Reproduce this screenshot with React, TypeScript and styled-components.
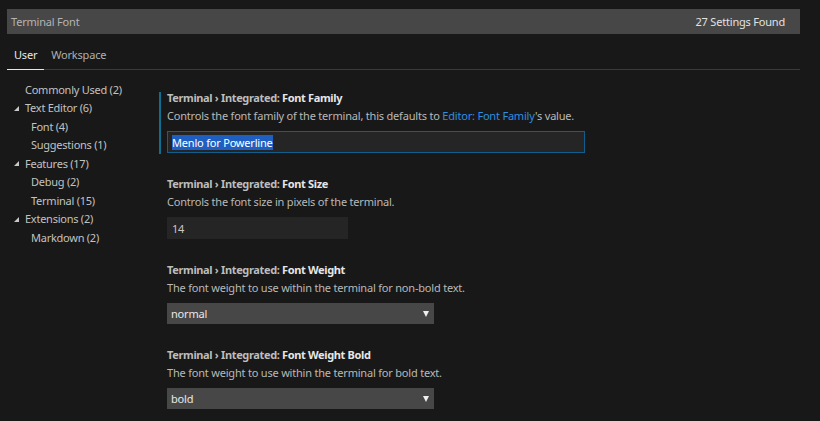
import React from "react";
import styled, { createGlobalStyle } from "styled-components";

const Global = createGlobalStyle`
  html, body { margin: 0; padding: 0; background: #181818; }
  body { font-family: "Noto Sans", "Open Sans", sans-serif; font-size: 11px; color: #c0c0c0; }
  * { box-sizing: border-box; }
`;

const Page = styled.div`
  width: 820px;
  height: 421px;
  overflow: hidden;
  background: #181818;
  display: flex;
  flex-direction: column;
`;

const Header = styled.div`
  padding: 9px 20px 0 7px;
  display: flex;
  flex-direction: column;
`;

const SearchBar = styled.div`
  height: 25px;
  background: #474747;
  display: flex;
  align-items: center;
  justify-content: space-between;
  padding: 0 15px 0 4px;
`;

const SearchText = styled.span`
  color: #b4b4b4;
  font-size: 11px;
  letter-spacing: -0.2px;
`;

const Count = styled.span`
  color: #e2e2e2;
  font-size: 11px;
  letter-spacing: -0.2px;
`;

const TabRow = styled.div`
  display: flex;
  border-bottom: 1px solid #3a3a3a;
`;

const Tab = styled.div<{ $active?: boolean }>`
  padding: 12px 7px 5px;
  line-height: 18px;
  font-size: 11px;
  letter-spacing: -0.2px;
  color: ${(p) => (p.$active ? "#e8e8e8" : "#b0b0b0")};
  border-bottom: 1px solid ${(p) => (p.$active ? "#e8e8e8" : "transparent")};
  margin-bottom: -1px;
`;

const Body = styled.div`
  display: flex;
  flex: 1;
`;

const Tree = styled.div`
  width: 159px;
  padding: 10px 0 0 0;
  display: flex;
  flex-direction: column;
`;

const TreeRow = styled.div<{ $level: number }>`
  height: 18.5px;
  display: flex;
  align-items: center;
  padding-left: ${(p) => (p.$level === 0 ? 14 : 31)}px;
  color: #c2c2c2;
  font-size: 11px;
  letter-spacing: -0.25px;
  white-space: nowrap;
`;

const Twistie = styled.span<{ $show: boolean }>`
  width: 11px;
  height: 6px;
  flex: none;
  display: inline-block;
  position: relative;
  top: 1px;
  &::before {
    content: "";
    display: ${(p) => (p.$show ? "block" : "none")};
    width: 0;
    height: 0;
    border-bottom: 5px solid #c8c8c8;
    border-left: 5px solid transparent;
  }
`;

const Settings = styled.div`
  flex: 1;
  padding-top: 22px;
  display: flex;
  flex-direction: column;
  gap: 24px;
`;

const Setting = styled.div<{ $focused?: boolean }>`
  border-left: 2px solid ${(p) => (p.$focused ? "#0f6f93" : "transparent")};
  padding: 0 0 1px 6px;
  display: flex;
  flex-direction: column;
  align-items: flex-start;
`;

const Title = styled.div`
  line-height: 12px;
  font-size: 11px;
  font-weight: 700;
  letter-spacing: -0.35px;
  color: #bdbdbd;
`;

const Key = styled.span`
  color: #e6e6e6;
`;

const Desc = styled.div`
  margin-top: 3px;
  line-height: 18px;
  font-size: 11px;
  letter-spacing: -0.2px;
  color: #b8b8b8;
`;

const Link = styled.span`
  color: #2f8ee0;
`;

const TextInput = styled.div<{ $focused?: boolean; $width: number }>`
  margin-top: 6px;
  width: ${(p) => p.$width}px;
  height: 22px;
  background: #252525;
  border: 1px solid ${(p) => (p.$focused ? "#0e5f8e" : "transparent")};
  display: flex;
  align-items: center;
  padding-left: 4px;
  font-size: 11px;
  letter-spacing: -0.2px;
  color: #c8c8c8;
`;

const Selected = styled.span`
  background: #1f5fc2;
  color: #ffffff;
  line-height: 15px;
`;

const Select = styled.div`
  margin-top: 6px;
  width: 267px;
  height: 21px;
  background: #474747;
  display: flex;
  align-items: center;
  justify-content: space-between;
  padding: 0 5px 0 4px;
  font-size: 11px;
  letter-spacing: -0.2px;
  color: #e8e8e8;
`;

const Arrow = styled.span`
  width: 0;
  height: 0;
  border-left: 3.5px solid transparent;
  border-right: 3.5px solid transparent;
  border-top: 6px solid #f0f0f0;
`;

const tree = [
  { label: "Commonly Used (2)", level: 0, twistie: false },
  { label: "Text Editor (6)", level: 0, twistie: true },
  { label: "Font (4)", level: 1, twistie: false },
  { label: "Suggestions (1)", level: 1, twistie: false },
  { label: "Features (17)", level: 0, twistie: true },
  { label: "Debug (2)", level: 1, twistie: false },
  { label: "Terminal (15)", level: 1, twistie: false },
  { label: "Extensions (2)", level: 0, twistie: true },
  { label: "Markdown (2)", level: 1, twistie: false },
];

export default function App() {
  return (
    <Page>
      <Global />
      <Header>
        <SearchBar>
          <SearchText>Terminal Font</SearchText>
          <Count>27 Settings Found</Count>
        </SearchBar>
        <TabRow>
          <Tab $active>User</Tab>
          <Tab>Workspace</Tab>
        </TabRow>
      </Header>
      <Body>
        <Tree>
          {tree.map((t) => (
            <TreeRow key={t.label} $level={t.level}>
              {t.level === 0 && <Twistie $show={t.twistie} />}
              {t.label}
            </TreeRow>
          ))}
        </Tree>
        <Settings>
          <Setting $focused>
            <Title>
              Terminal › Integrated: <Key>Font Family</Key>
            </Title>
            <Desc>
              Controls the font family of the terminal, this defaults to{" "}
              <Link>Editor: Font Family</Link>'s value.
            </Desc>
            <TextInput $focused $width={418}>
              <Selected>Menlo for Powerline</Selected>
            </TextInput>
          </Setting>
          <Setting>
            <Title>
              Terminal › Integrated: <Key>Font Size</Key>
            </Title>
            <Desc>Controls the font size in pixels of the terminal.</Desc>
            <TextInput $width={181}>14</TextInput>
          </Setting>
          <Setting>
            <Title>
              Terminal › Integrated: <Key>Font Weight</Key>
            </Title>
            <Desc>The font weight to use within the terminal for non-bold text.</Desc>
            <Select>
              normal
              <Arrow />
            </Select>
          </Setting>
          <Setting>
            <Title>
              Terminal › Integrated: <Key>Font Weight Bold</Key>
            </Title>
            <Desc>The font weight to use within the terminal for bold text.</Desc>
            <Select>
              bold
              <Arrow />
            </Select>
          </Setting>
        </Settings>
      </Body>
    </Page>
  );
}
